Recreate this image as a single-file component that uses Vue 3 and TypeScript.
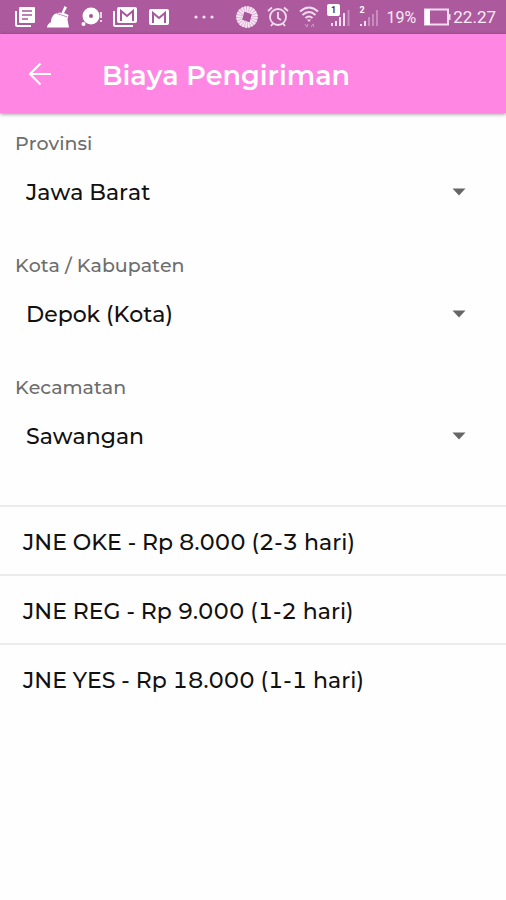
<script setup lang="ts">
import { ref } from 'vue'

interface Field {
  id: string
  label: string
  options: string[]
}

interface Rate {
  service: string
  price: string
  days: string
}

const fields: Field[] = [
  { id: 'provinsi', label: 'Provinsi', options: ['Jawa Barat'] },
  { id: 'kota', label: 'Kota / Kabupaten', options: ['Depok (Kota)'] },
  { id: 'kecamatan', label: 'Kecamatan', options: ['Sawangan'] },
]

const selected = ref<string[]>(fields.map((f) => f.options[0]))

const rates: Rate[] = [
  { service: 'JNE OKE', price: '8.000', days: '2-3' },
  { service: 'JNE REG', price: '9.000', days: '1-2' },
  { service: 'JNE YES', price: '18.000', days: '1-1' },
]
</script>

<template>
  <div class="screen">
    <div class="status">
      <div class="notices">
        <!-- news -->
        <svg width="22" height="22" viewBox="0 0 22 22">
          <path d="M2 5v13.500q0 1.500 1.500 1.500H17" fill="none" stroke="#fff" stroke-width="2" />
          <rect x="5" y="1" width="16" height="16" rx="1" fill="#fff" />
          <path d="M8 5h10M8 9h10M8 13h6" stroke="#a8579a" stroke-width="1.600" />
        </svg>
        <!-- cleaner broom -->
        <svg width="24" height="22" viewBox="0 0 24 22">
          <path d="M18.500 0l2.500 1.500-3 5.500 4.500 2-1 4.500 1.500 8H1q0-3 4-5.500 0-5 3.500-8l5-1.500 2 .5z" fill="#fff" />
          <path d="M11 7.500l10.500 3.500" stroke="#c98abf" stroke-width="1" />
        </svg>
        <!-- disc -->
        <svg width="22" height="22" viewBox="0 0 22 22">
          <circle cx="11" cy="10" r="8.500" fill="#fff" />
          <circle cx="11" cy="10" r="2" fill="#a8579a" />
          <circle cx="3.500" cy="18" r="2" fill="#fff" />
          <path d="M21 6v6M21 14v2" stroke="#ecd0e7" stroke-width="2" />
        </svg>
        <!-- stacked mail -->
        <svg width="26" height="22" viewBox="0 0 26 22">
          <path d="M2 5v13.500q0 1.500 1.500 1.500H21" fill="none" stroke="#fff" stroke-width="2" />
          <rect x="5" y="1" width="20" height="16" rx="2" fill="#fff" />
          <path d="M9 15V5l6 5 6-5v10" fill="none" stroke="#a8579a" stroke-width="2" />
        </svg>
        <!-- mail -->
        <svg width="22" height="22" viewBox="0 0 22 22">
          <rect x="1" y="3" width="20" height="16" rx="2" fill="#fff" />
          <path d="M5 17V7l6 5 6-5v10" fill="none" stroke="#a8579a" stroke-width="2" />
        </svg>
        <svg class="more" width="20" height="22" viewBox="0 0 20 22">
          <g fill="#f4dff1">
            <circle cx="2" cy="11" r="1.600" />
            <circle cx="10" cy="11" r="1.600" />
            <circle cx="18" cy="11" r="1.600" />
          </g>
        </svg>
      </div>
      <div class="system">
        <!-- rotating ring -->
        <svg width="24" height="22" viewBox="0 0 24 22">
          <circle cx="12" cy="11" r="8" fill="none" stroke="#dcb0d5" stroke-width="5.500" />
          <circle cx="12" cy="11" r="8" fill="none" stroke="#f7e6f4" stroke-width="5.500" stroke-dasharray="1.600 .9" />
          <path d="M9 5l8.500 3L15 17l-8.500-3z" fill="#a8579a" stroke="#f7e6f4" stroke-width="1" />
        </svg>
        <!-- alarm -->
        <svg width="22" height="22" viewBox="0 0 22 22" fill="none" stroke="#f3dcef" stroke-width="1.800">
          <circle cx="11" cy="11" r="8" />
          <path d="M11 6v6l3 2M1 5l4-3.500M21 5l-4-3.500M4 20l2-2.500M18 20l-2-2.500" />
        </svg>
        <!-- wifi -->
        <svg width="22" height="22" viewBox="0 0 20 22" fill="none" stroke="#f3dcef" stroke-width="2">
          <path d="M2 5.500q9-8 18 0M4.500 9q6.500-6 13 0M7.500 12q3.500-3 7 0" />
          <path d="M9 13.500h4l-2 2.500z" fill="#f3dcef" stroke="none" />
          <path d="M7 18l2 3 1-3M13 21l2-3 1 3" stroke="#cf9ac7" stroke-width="1" />
        </svg>
        <!-- signal, first card -->
        <svg width="24" height="26" viewBox="0 0 24 26">
          <path d="M5 22v-3M9 22v-5M13 22V13M17 22V9" stroke="#f3dcef" stroke-width="2" />
          <path d="M21.500 22V6" stroke="#c78bbd" stroke-width="2" />
          <rect x="0" y="0" width="13" height="12" rx="2" fill="#fff" />
          <text x="6.500" y="9" text-anchor="middle" class="sim dark">1</text>
        </svg>
        <!-- signal, second card -->
        <svg width="20" height="26" viewBox="0 0 20 26">
          <path d="M2 22v-2M6 22v-5" stroke="#f3dcef" stroke-width="2" />
          <path d="M10 22V13M14 22V10M18 22V6" stroke="#c78bbd" stroke-width="2" />
          <text x="3" y="9" text-anchor="middle" class="sim">2</text>
        </svg>
        <span class="percent">19%</span>
        <!-- battery -->
        <svg width="27" height="22" viewBox="0 0 27 22">
          <rect x="1" y="3.500" width="23" height="15" fill="none" stroke="#f3dcef" stroke-width="2" />
          <rect x="1" y="3" width="5" height="16" fill="#fff" />
          <path d="M25.500 8v6" stroke="#f3dcef" stroke-width="2" />
        </svg>
        <span class="clock">22.27</span>
      </div>
    </div>

    <header class="bar">
      <button class="back" type="button" aria-label="Kembali">
        <svg width="24" height="24" viewBox="0 0 24 24" fill="none" stroke="#fff" stroke-width="2.200">
          <path d="M23 12H2M12.500 1.500L2 12l10.500 10.500" />
        </svg>
      </button>
      <h1>Biaya Pengiriman</h1>
    </header>

    <main>
      <form class="fields">
        <div v-for="(field, i) in fields" :key="field.id" class="field">
          <label :for="field.id">{{ field.label }}</label>
          <div class="picker">
            <select :id="field.id" v-model="selected[i]">
              <option v-for="o in field.options" :key="o">{{ o }}</option>
            </select>
            <svg class="caret" width="14" height="8" viewBox="0 0 14 8">
              <path d="M.5 .5h13L7 7.500z" fill="#666" />
            </svg>
          </div>
        </div>
      </form>

      <ul class="rates">
        <li v-for="rate in rates" :key="rate.service">
          {{ rate.service }} - Rp {{ rate.price }} ({{ rate.days }} hari)
        </li>
      </ul>
    </main>
  </div>
</template>

<style>
body {
  background: #fefefe;
}
</style>

<style scoped>
.screen {
  font-family: Montserrat, Inter, "Open Sans", sans-serif;
  font-weight: 500;
  font-kerning: none;
  font-variant-numeric: tabular-nums;
  color: #111;
}

.status {
  display: flex;
  justify-content: space-between;
  align-items: center;
  height: 34px;
  padding: 0 10px 0 14px;
  background: #ac5a9d;
  color: #f8eaf6;
  font-family: Roboto, sans-serif;
  font-weight: 400;
}

.notices,
.system {
  display: flex;
  align-items: center;
}

.notices {
  gap: 10px;
}

.more {
  margin-left: 14px;
}

.system {
  gap: 8px;
}

.percent {
  font-size: 16px;
}

.clock {
  margin-left: -6px;
  font-size: 17px;
}

.sim {
  font-size: 9px;
  font-weight: 700;
  fill: #fff;
}

.sim.dark {
  fill: #55304f;
}

.bar {
  display: flex;
  align-items: center;
  gap: 50px;
  height: 79px;
  padding: 0 28px;
  background: #ff86e2;
  box-shadow: 0 1px 4px rgba(0, 0, 0, 0.45);
}

.back {
  display: flex;
  padding: 0;
  border: 0;
  background: none;
  cursor: pointer;
}

h1 {
  margin: 0;
  padding-top: 4px;
  color: #fff;
  font-size: 27px;
  line-height: 36px;
  font-weight: 600;
}

.fields {
  padding: 19px 15px 7px;
}

.field {
  height: 122px;
}

label {
  display: block;
  color: #6d6d6d;
  font-size: 19px;
  line-height: 24px;
}

.picker {
  display: flex;
  align-items: center;
  margin-top: 12px;
  padding-right: 25px;
}

select {
  flex: 1;
  min-width: 0;
  height: 48px;
  margin: 0 -14px 0 0;
  padding: 0 14px 0 11px;
  border: 0;
  background: transparent;
  appearance: none;
  color: #111;
  font: inherit;
  font-size: 22px;
  font-kerning: none;
}

.caret {
  pointer-events: none;
}

.rates {
  margin: 0;
  padding: 0;
  list-style: none;
}

.rates li {
  padding: 20px 23px 15px;
  border-top: 2px solid #ececec;
  font-size: 22px;
  line-height: 32px;
}
</style>
